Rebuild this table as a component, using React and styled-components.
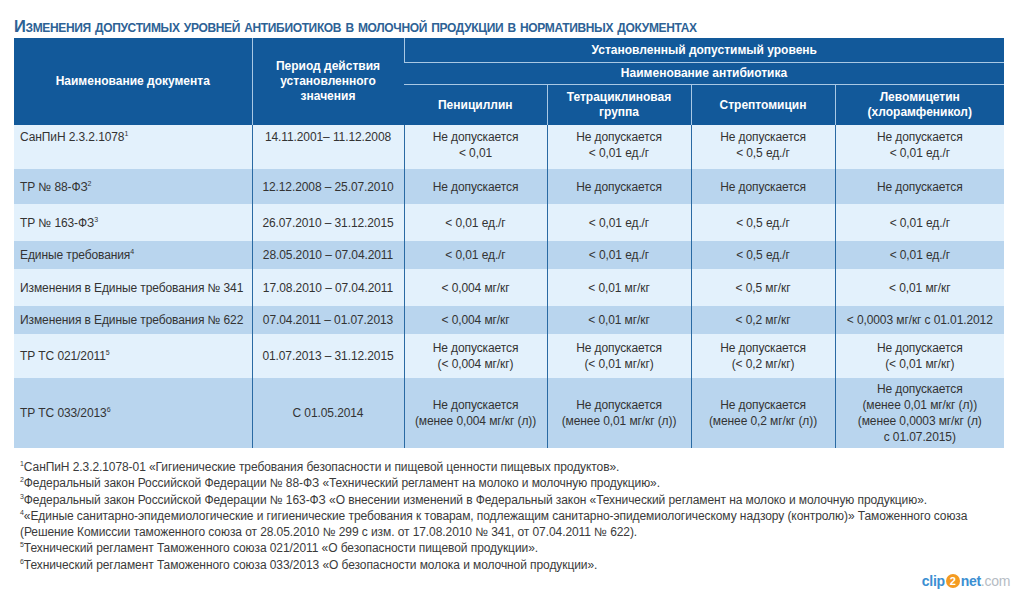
import React from "react";
import styled, { createGlobalStyle } from "styled-components";

const Global = createGlobalStyle`
  html, body { margin: 0; padding: 0; background: #fff; }
  body { font-family: "Liberation Sans", Arial, sans-serif; }
`;

const Page = styled.div`
  width: 1024px;
  height: 594px;
  display: flex;
  flex-direction: column;
  overflow: hidden;
  position: relative;
`;

const Content = styled.div`
  padding: 17px 20px 0 14px;
  display: flex;
  flex-direction: column;
`;

const Title = styled.h1`
  margin: 0 0 3px 0;
  font-family: "Liberation Sans", sans-serif;
  font-size: 16.5px;
  line-height: 18px;
  font-weight: 700;
  font-variant: small-caps;
  letter-spacing: -0.35px;
  color: #2d6295;
`;

const Table = styled.table`
  border-collapse: collapse;
  table-layout: fixed;
  width: 990px;
`;

const Head = styled.th`
  background: #12599a;
  color: #fff;
  font-weight: 700;
  font-size: 12px;
  line-height: 15px;
  text-align: center;
  vertical-align: middle;
  padding: 0 4px;
  border-left: 1px solid #a9c8e4;
  border-top: 1px solid #a9c8e4;
  height: ${(p) => p.$h}px;
  &:first-child { border-left: none; }
`;

const HeadRow = styled.tr`
  &:first-child th { border-top: none; }
`;

const Row = styled.tr`
  background: ${(p) => (p.$dark ? "#b9d5ee" : "#e3f1fc")};
  height: ${(p) => p.$h}px;
`;

const Cell = styled.td`
  font-size: 12px;
  line-height: 16px;
  color: #333;
  text-align: ${(p) => (p.$left ? "left" : "center")};
  vertical-align: ${(p) => (p.$top ? "top" : "middle")};
  padding: ${(p) => (p.$top ? "4px" : "0")} ${(p) => (p.$left ? "6px" : "4px")} 0;
  border-left: 1px solid #2a6aa3;
  letter-spacing: -0.1px;
  &:first-child { border-left: none; }
`;

const Sup = styled.sup`
  font-size: 7px;
  line-height: 0;
  vertical-align: 5px;
`;

const Notes = styled.div`
  margin-top: 11px;
  padding-left: 6px;
  font-size: 12px;
  line-height: 16.3px;
  color: #3a3a3a;
  letter-spacing: -0.08px;
`;

const Note = styled.div``;

const Bottom = styled.div`
  margin-top: auto;
  display: flex;
  align-items: flex-end;
  justify-content: space-between;
`;

const Taskbar = styled.div`
  width: 820px;
  height: 2px;
  background: linear-gradient(90deg, #5b86ad, #7ea4c6 40%, #c6d8e8 60%, #7ea4c6 80%, #5b86ad);
  display: flex;
  gap: 4px;
  padding-left: 55px;
  box-sizing: border-box;
`;

const Tab = styled.div`
  width: 53px;
  height: 2px;
  background: #e6ecf2;
  border-left: 1px solid #445;
  border-right: 1px solid #445;
`;

const Logo = styled.div`
  margin: 0 14px 9px 0;
  font-family: "Liberation Sans", sans-serif;
  font-size: 14px;
  font-weight: 700;
  color: #3b8fd2;
  display: flex;
  align-items: center;
  letter-spacing: -0.3px;
`;

const Two = styled.span`
  display: inline-block;
  width: 14px;
  height: 14px;
  border-radius: 50%;
  background: #f49b22;
  color: #fff;
  font-size: 11px;
  line-height: 14px;
  text-align: center;
  margin: 0 1px;
`;

const Com = styled.span`
  color: #b5bcc4;
  font-weight: 400;
`;

const rows = [
  { doc: "СанПиН 2.3.2.1078", sup: "1", period: "14.11.2001– 11.12.2008", h: 44, top: true,
    v: [["Не допускается", "< 0,01"], ["Не допускается", "< 0,01 ед./г"], ["Не допускается", "< 0,5 ед./г"], ["Не допускается", "< 0,01 ед./г"]] },
  { doc: "ТР № 88-ФЗ", sup: "2", period: "12.12.2008 – 25.07.2010", h: 35, dark: true,
    v: [["Не допускается"], ["Не допускается"], ["Не допускается"], ["Не допускается"]] },
  { doc: "ТР № 163-ФЗ", sup: "3", period: "26.07.2010 – 31.12.2015", h: 37,
    v: [["< 0,01 ед./г"], ["< 0,01 ед./г"], ["< 0,5 ед./г"], ["< 0,01 ед./г"]] },
  { doc: "Единые требования", sup: "4", period: "28.05.2010 – 07.04.2011", h: 28, dark: true,
    v: [["< 0,01 ед./г"], ["< 0,01 ед./г"], ["< 0,5 ед./г"], ["< 0,01 ед./г"]] },
  { doc: "Изменения в Единые требования № 341", period: "17.08.2010 – 07.04.2011", h: 37,
    v: [["< 0,004 мг/кг"], ["< 0,01 мг/кг"], ["< 0,5 мг/кг"], ["< 0,01 мг/кг"]] },
  { doc: "Изменения в Единые требования № 622", period: "07.04.2011 – 01.07.2013", h: 28, dark: true,
    v: [["< 0,004 мг/кг"], ["< 0,01 мг/кг"], ["< 0,2 мг/кг"], ["< 0,0003 мг/кг с 01.01.2012"]] },
  { doc: "ТР ТС 021/2011", sup: "5", period: "01.07.2013 – 31.12.2015", h: 44,
    v: [["Не допускается", "(< 0,004 мг/кг)"], ["Не допускается", "(< 0,01 мг/кг)"], ["Не допускается", "(< 0,2 мг/кг)"], ["Не допускается", "(< 0,01 мг/кг)"]] },
  { doc: "ТР ТС 033/2013", sup: "6", period: "С 01.05.2014", h: 70, dark: true,
    v: [["Не допускается", "(менее 0,004 мг/кг (л))"], ["Не допускается", "(менее 0,01 мг/кг (л))"], ["Не допускается", "(менее 0,2 мг/кг (л))"],
        ["Не допускается", "(менее 0,01 мг/кг (л))", "(менее 0,0003 мг/кг (л)", "с 01.07.2015)"]] },
];

const notes = [
  ["1", "СанПиН 2.3.2.1078-01 «Гигиенические требования безопасности и пищевой ценности пищевых продуктов»."],
  ["2", "Федеральный закон Российской Федерации № 88-ФЗ «Технический регламент на молоко и молочную продукцию»."],
  ["3", "Федеральный закон Российской Федерации № 163-ФЗ «О внесении изменений в Федеральный закон «Технический регламент на молоко и молочную продукцию»."],
  ["4", "«Единые санитарно-эпидемиологические и гигиенические требования к товарам, подлежащим санитарно-эпидемиологическому надзору (контролю)» Таможенного союза"],
  ["", "(Решение Комиссии таможенного союза от 28.05.2010 № 299 с изм. от 17.08.2010 № 341, от 07.04.2011 № 622)."],
  ["5", "Технический регламент Таможенного союза 021/2011 «О безопасности пищевой продукции»."],
  ["6", "Технический регламент Таможенного союза 033/2013 «О безопасности молока и молочной продукции»."],
];

const Lines = ({ items }) =>
  items.map((t, i) => (
    <React.Fragment key={i}>
      {i > 0 && <br />}
      {t}
    </React.Fragment>
  ));

export default function App() {
  return (
    <Page>
      <Global />
      <Content>
        <Title>Изменения допустимых уровней антибиотиков в молочной продукции в нормативных документах</Title>
        <Table>
          <colgroup>
            <col style={{ width: 238 }} />
            <col style={{ width: 152 }} />
            <col style={{ width: 143 }} />
            <col style={{ width: 144 }} />
            <col style={{ width: 144 }} />
            <col style={{ width: 169 }} />
          </colgroup>
          <thead>
            <HeadRow>
              <Head rowSpan={3} $h={24}>Наименование документа</Head>
              <Head rowSpan={3} $h={24}>Период действия<br />установленного<br />значения</Head>
              <Head colSpan={4} $h={24}>Установленный допустимый уровень</Head>
            </HeadRow>
            <HeadRow>
              <Head colSpan={4} $h={21}>Наименование антибиотика</Head>
            </HeadRow>
            <HeadRow>
              <Head $h={40}>Пенициллин</Head>
              <Head $h={40}>Тетрациклиновая<br />группа</Head>
              <Head $h={40}>Стрептомицин</Head>
              <Head $h={40}>Левомицетин<br />(хлорамфеникол)</Head>
            </HeadRow>
          </thead>
          <tbody>
            {rows.map((r, i) => (
              <Row key={i} $dark={r.dark} $h={r.h}>
                <Cell $left $top={r.top}>
                  {r.doc}
                  {r.sup && <Sup>{r.sup}</Sup>}
                </Cell>
                <Cell $top={r.top}>{r.period}</Cell>
                {r.v.map((c, j) => (
                  <Cell key={j} $top={r.top}>
                    <Lines items={c} />
                  </Cell>
                ))}
              </Row>
            ))}
          </tbody>
        </Table>
        <Notes>
          {notes.map(([s, t], i) => (
            <Note key={i}>
              {s && <Sup>{s}</Sup>}
              {t}
            </Note>
          ))}
        </Notes>
      </Content>
      <Bottom>
        <Taskbar>
          <Tab />
          <Tab />
          <Tab />
          <Tab />
        </Taskbar>
        <Logo>
          clip<Two>2</Two>net<Com>.com</Com>
        </Logo>
      </Bottom>
    </Page>
  );
}
